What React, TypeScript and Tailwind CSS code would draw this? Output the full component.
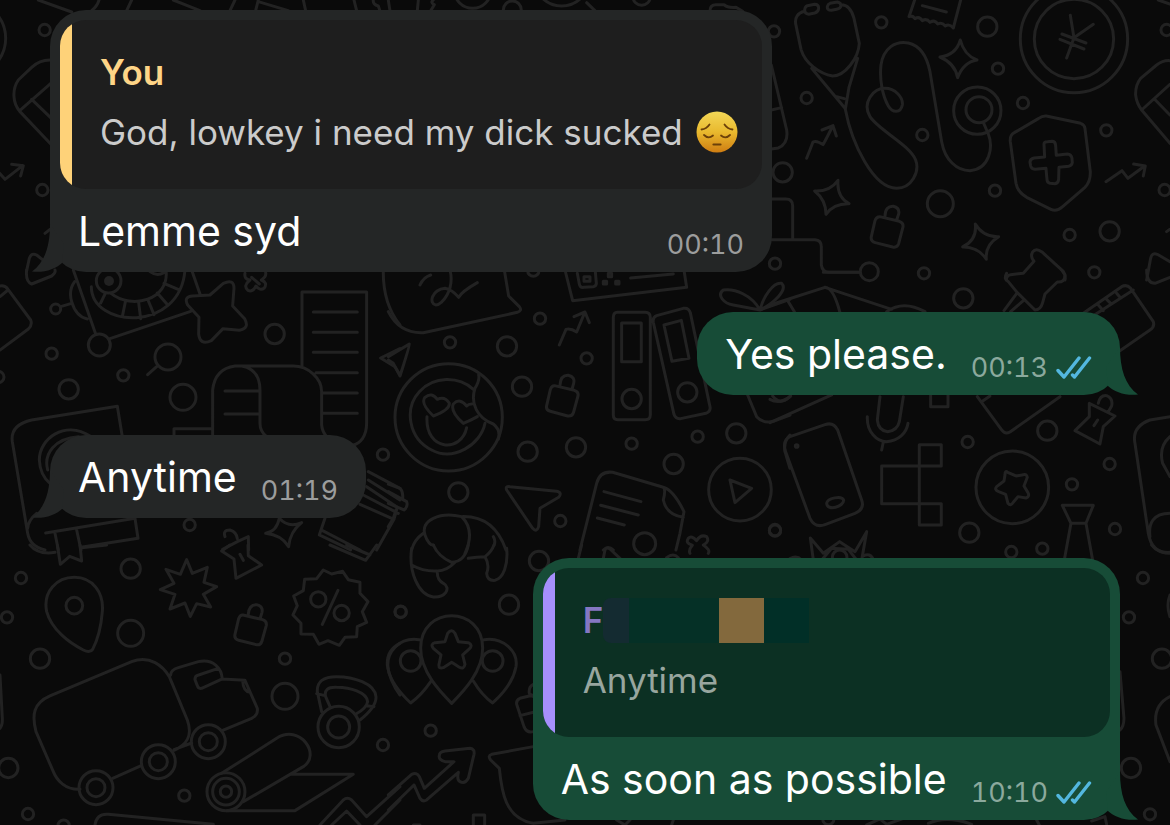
import { ReactNode } from "react";
import clsx from "clsx";

type Circle = [cx: number, cy: number, r: number];

interface Doodle {
  x: number;
  y: number;
  circles: Circle[];
  paths: string[];
}

// Wallpaper doodles, drawn at three times their final size
const doodles: Doodle[] = [
  {
    x: 0,
    y: 0,
    circles: [
      [134, 90, 17],
      [127, 570, 17],
      [-95, 115, 112],
    ],
    paths: [
      // top edge fragments
      "M115 0L215 36M297 0Q292 18 275 32M395 0L380 32M520 0L600 32M705 0L690 32M775 0L767 32M775 5L865 32M910 0L917 32M1062 0L1070 32M1120 0Q1118 14 1135 18L1140 32M1165 0L1170 32",
      // card
      "M155 180Q120 178 95 202L55 240Q40 262 42 290Q43 315 60 335L155 435M60 331L155 248M95 298L155 356",
      // arrow
      "M-10 510L15 538L68 497M35 493L70 497L62 528",
      "M135 700L150 688",
      "M80 812L88 775Q95 757 110 765L135 785",
    ],
  },
  {
    x: 400,
    y: 0,
    circles: [
      [218, -30, 55],
      [337, 30, 27],
      [485, -65, 83],
      [725, -10, 26],
    ],
    paths: [
      "M55 0L52 32M100 0Q90 8 103 14L92 32M560 8L588 35M930 32Q930 14 948 14H972Q982 24 1008 22L1028 34",
    ],
  },
  {
    x: 770,
    y: 0,
    circles: [
      [334, 67, 17],
      [684, 206, 17],
      [759, 309, 17],
      [110, 294, 17],
      [457, 405, 17],
      [1009, 391, 17],
      [675, 572, 17],
      [899, 705, 17],
      [15, 791, 17],
      [462, 820, 17],
      [973, 817, 17],
      [1190, 90, 17],
      [1184, 570, 17],
      [12, 94, 17],
      [652, 80, 29],
      [38, 517, 29],
      [1019, 694, 29],
      [298, 815, 27],
      [511, 611, 39],
      [912, 117, 161],
      [912, 117, 119],
      [622, 332, 71],
      [627, 329, 39],
    ],
    paths: [
      // stethoscope
      "M103 34C85 38 72 52 78 76L93 148C105 190 150 222 188 228C225 228 265 175 268 130L252 55C244 25 230 14 214 14",
      "M112 17L134 13Q146 13 146 25Q145 36 134 39L116 43Q103 41 104 29Q105 20 112 17Z",
      "M180 10L202 6Q213 8 213 17Q212 26 200 28L184 31Q171 31 172 20Q174 12 180 10Z",
      "M125 205L225 325M263 175L237 262L226 328M200 290L223 296",
      "M226 328C245 430 310 565 380 565C425 565 450 515 437 480C420 435 325 390 300 350C275 308 310 265 345 265C375 265 400 292 397 315C392 340 368 340 355 318C338 288 328 240 333 195C340 145 375 122 415 129C455 138 472 175 480 215L515 425C525 480 560 512 600 512C660 508 670 440 655 402L640 367",
      // receipt
      "M434 0L417 50Q428 45 435 56Q448 48 457 62Q470 54 480 67Q494 58 503 72Q515 65 526 78Q538 70 550 84L572 0M457 17L529 36",
      // sparkles
      "M571 120Q582 165 621 180Q580 187 563 233Q555 190 510 171Q558 165 571 120Z",
      "M204 541Q200 590 237 611Q190 610 168 643Q168 600 134 573Q180 575 204 541Z",
      "M616 672Q640 712 686 710Q645 735 649 778Q625 740 578 741Q622 720 616 672Z",
      // yen
      "M901 46L912 113L970 73M912 113L890 174M876 102L948 129M870 118L942 147",
      // shield
      "M829 348L932 370Q944 374 945 385L961 515Q962 545 945 562L878 620Q860 636 843 628L770 592Q742 575 738 550L721 425Q719 405 733 398L805 356Q817 347 829 348Z",
      "M822 432Q822 425 832 425L846 424Q856 424 857 436L859 466L892 462Q904 463 906 475L907 488Q906 497 896 499L867 502L866 538Q865 550 855 551L840 550Q831 548 831 538L828 505L795 508Q784 507 782 498L780 486Q781 476 792 474L824 471Z",
      // chart arrows
      "M110 475L129 426Q140 420 159 434Q170 415 188 378M156 390L189 377L199 408",
      "M1008 545L1056 512L1074 535L1124 498M1091 492L1126 498L1120 528",
      // padlock
      "M329 650L388 664Q401 668 399 681L386 731Q382 744 368 741L316 728Q301 723 304 710L315 662Q319 650 329 650ZM345 648Q346 618 370 619Q390 624 386 642L380 660",
      // card
      "M1200 182Q1180 180 1160 195L1112 235Q1096 255 1097 285Q1100 310 1115 330L1200 430M1115 330L1200 253M1154 298L1200 345",
      // capsule and pipe
      "M4 195L50 390Q56 430 25 444L4 447M4 330L35 323",
      "M4 597H48Q68 597 68 618V719M4 719H135Q154 720 154 740V795Q157 817 178 817H270",
      // push pin
      "M709 840Q710 826 722 824L760 820L792 784Q780 770 788 756Q798 742 816 756L880 814Q888 826 885 840",
      "M1130 840L1142 775Q1146 757 1162 763L1200 785M1165 0L1200 12M1190 695L1200 688",
    ],
  },
  {
    x: 0,
    y: 270,
    circles: [
      [155, 251, 17],
      [370, 316, 17],
      [1149, 554, 17],
      [569, 765, 17],
      [-5, 321, 17],
      [167, 117, 15],
      [206, 358, 29],
      [824, 192, 29],
      [298, 225, 33],
      [504, 261, 39],
      [549, 382, 39],
      [326, 32, 37],
    ],
    paths: [
      // gadget and film reel
      "M80 0Q76 34 95 42L155 18Q168 8 165 0M0 48Q15 45 24 58L92 150Q98 165 85 177L0 240M24 60L0 80M182 110L212 101",
      "M220 0L287 192M330 206L572 124M575 0L600 72M224 35Q205 60 215 95Q228 140 262 147",
      "M274 50C275 175 540 190 555 0M333 70C395 120 510 90 498 0M376 96L367 140M416 98L422 146M444 90L462 134M472 69L504 106M492 40L538 60M316 70L302 99M450 5Q470 20 492 8",
      // magnifier handle
      "M470 290L443 314",
      // star and clover
      "M578 78L630 75L670 40Q702 25 702 55L698 108L734 146Q750 175 718 181L669 176L634 212Q600 228 596 192L597 142L563 105Q550 80 578 78Z",
      "M735 10Q732 28 750 30Q728 48 744 61Q758 68 768 48Q780 64 793 54Q804 38 784 30Q800 20 797 8M755 22L778 42",
      // printed roll
      "M906 292V66H1100V460C1100 500 1080 520 1060 525M940 126H1072M940 187H1072M940 247H1072M948 308H1072M970 369H1072M970 430H1072",
      "M638 500V360Q645 296 705 288H880C925 288 965 325 965 365V465Q967 485 980 500M725 288Q780 298 780 360V460Q780 485 800 500M675 363H778M675 432H776M522 500V476H638",
      // album
      "M367 500L352 409L95 450Q30 465 37 515L83 790Q90 830 135 840M270 498C195 450 118 505 118 570Q120 615 150 640M235 500C165 505 130 550 143 600M83 775Q85 750 110 730M137 789L405 745L414 805L243 832M165 790L175 840M230 780L243 840",
      // pins
      "M675 800Q668 780 690 780Q710 786 712 806M668 838L712 815L745 800L746 840",
      "M838 745Q865 775 905 758Q870 785 866 830Q845 795 797 790Q830 785 838 745Z",
      // paper stack
      "M1105 605L1200 655M1105 630L1200 690M1100 650L1192 712M1090 675L1195 730M1080 703L1182 748M975 745L958 795L1052 840M968 782L1080 840M1182 748L1130 840M1192 712L1182 748",
      "M1150 0Q1148 100 1200 165M1200 236L1142 264L1185 290L1200 315",
    ],
  },
  {
    x: 390,
    y: 270,
    circles: [
      [450, 146, 17],
      [180, 217, 17],
      [590, 265, 17],
      [725, 521, 17],
      [923, 500, 17],
      [511, 753, 17],
      [1155, 780, 17],
      [430, 2, 17],
      [351, 229, 29],
      [396, 350, 29],
      [413, 545, 29],
      [558, 532, 29],
      [851, 582, 29],
      [1039, 490, 29],
      [205, 667, 29],
      [725, 387, 29],
      [892, 367, 29],
      [176, 442, 161],
      [1050, 659, 94],
      [764, 821, 33],
    ],
    paths: [
      // speech bubble
      "M-5 125C15 165 50 190 100 188L382 127Q398 122 388 110L356 78L343 0M90 45Q100 22 122 15M180 0C195 60 155 105 138 105C115 100 125 60 165 55Q185 58 206 82Q215 65 262 38",
      // ticket
      "M525 0L548 92L890 52L882 0M562 10L568 42Q570 54 582 52L610 50Q620 48 619 38L616 5M582 20h18v14h-18ZM655 10h10v10h-10ZM640 34h10v8h-10ZM677 34h10v8h-10ZM722 24L850 12",
      // chart arrow
      "M508 225L528 178Q542 174 560 186L584 128M552 140L585 126L598 158",
      // binders
      "M682 127H766Q781 127 781 142V434Q781 449 766 449H684Q670 449 670 434V142Q670 127 682 127ZM695 159H754V275H695Z",
      "M800 137L880 115Q896 112 901 128L960 410Q963 425 948 430L872 446Q857 448 852 433L790 157Q787 142 800 137ZM822 165L874 151L897 265L846 274Z",
      // padlock
      "M494 347L553 361Q567 365 564 378L551 426Q547 440 533 438L481 424Q467 420 470 407L481 359Q485 346 494 347ZM510 345Q512 315 535 316Q556 321 551 340L546 358",
      // donut face
      "M285 460C272 525 190 575 125 540C55 505 42 415 88 365C132 318 205 318 250 358M266 315Q270 330 255 355C240 400 262 445 310 462Q333 480 325 508",
      "M130 438Q90 400 105 382Q125 365 142 388Q165 378 178 400Q180 420 130 438ZM220 460Q180 425 190 402Q210 382 230 408Q235 402 245 402M220 460Q245 450 262 440M111 440C105 545 215 548 230 473",
      // paper planes
      "M-5 260L58 222Q60 225 30 318L10 280L-5 270M350 660Q345 648 360 650L500 664Q518 668 506 682L450 715L446 770Q440 788 428 775Z",
      // document
      "M570 840L620 640Q630 602 668 607L820 652Q850 660 882 725L870 790L858 840M820 652Q828 660 820 690Q830 735 880 742M642 665L753 695M632 706L745 735M622 744L703 765M640 840Q655 825 670 840",
      "M895 805Q905 795 920 812Q932 792 950 800Q960 815 940 825Q962 840 955 850M895 805Q885 820 907 826Q895 840 900 850",
      // croissant and stack corner
      "M105 795C90 750 150 725 215 740C240 765 248 800 225 850M105 795Q115 825 131 826M65 840Q72 810 100 790M215 740C270 738 320 760 348 840M310 800Q318 812 312 826",
      "M-5 642L30 655Q40 665 38 685M-5 665L50 695Q55 710 42 720L-5 700M18 720L10 745L-5 770",
      // bow
      "M1110 120C1085 75 1035 55 1000 60C980 75 1000 100 1030 105L1110 120C1120 80 1150 35 1175 40C1195 60 1150 100 1110 120ZM1110 120L1200 88",
      "M1073 375L1100 440Q1120 462 1150 454L1200 435M1148 378Q1170 408 1200 380M1020 630L1085 655L1035 698Z",
      "M1200 495Q1180 515 1185 545L1200 595",
    ],
  },
  {
    x: 770,
    y: 270,
    circles: [
      [593, 516, 17],
      [906, 643, 17],
      [1019, 582, 17],
      [15, 782, 17],
      [1035, 777, 17],
      [817, 836, 17],
      [724, 846, 17],
      [832, 482, 29],
      [598, 788, 29],
      [580, 85, 29],
      [80, 528, 4],
      [727, 652, 109],
      [209, 862, 22],
    ],
    paths: [
      // gift top
      "M0 105L165 52Q190 52 210 128M165 52L365 118M55 95L75 128M350 125Q400 90 465 125M160 7H270",
      // push pin
      "M710 10Q700 28 715 35L742 68L702 122M760 92L722 125M742 68L795 120Q812 120 818 98L825 72L862 36Q885 38 885 15L875 0",
      // books
      "M940 130L1055 50Q1070 42 1082 55L1150 155Q1155 170 1140 180L1050 242M950 150L1090 60M985 105L1000 122M1010 88L1022 100M1040 70L1050 82M1130 0Q1130 40 1155 40L1200 22",
      "M0 458L185 375M0 388Q30 405 62 378M622 380L695 480Q705 494 720 486L870 380M635 395L660 378",
      // microphone
      "M330 380L322 450Q325 482 353 485Q382 482 388 455L400 380M292 440C290 485 320 515 350 515C385 512 410 490 414 460M340 516L335 540M482 375V410H534V375",
      // phone
      "M60 500L165 464Q190 455 203 480L275 690Q285 718 255 730L165 764Q135 775 120 745L45 540Q38 510 60 500ZM170 700C172 685 215 675 221 690C222 710 172 725 170 700Z",
      // blocks
      "M335 588H514V524H448V765H514V701H335Z",
      // medal star
      "M713 607Q705 600 705 615L702 633L680 650Q672 660 686 665L707 673L714 700Q722 710 730 697L744 680L768 684Q780 680 774 668L762 648L772 622Q770 610 756 615L738 618Z",
      // pin
      "M958 400L1035 438L1000 470L990 522L915 482L958 440ZM985 400Q990 375 1010 377Q1030 385 1025 408L1015 425M983 450L972 467",
      // beaker
      "M877 706H970L948 760H903ZM903 760L883 870M948 760L968 870",
      // crown
      "M130 870L121 804L160 850L209 815L255 845L290 785L275 870M60 866Q80 855 95 870M280 858Q300 848 310 868M155 870L185 835L235 838L260 870",
      // album
      "M1200 440L1140 450Q1085 470 1095 520L1135 790Q1145 850 1200 850M1200 500Q1165 530 1178 580L1200 620M1200 730C1150 730 1135 760 1140 800",
    ],
  },
  {
    x: 0,
    y: 545,
    circles: [
      [63, 99, 17],
      [21, 217, 17],
      [855, 341, 17],
      [553, 752, 17],
      [84, 807, 17],
      [1149, 600, 17],
      [191, 842, 17],
      [1202, 200, 17],
      [392, 71, 29],
      [120, 341, 29],
      [25, 669, 29],
      [392, 265, 39],
      [855, 454, 39],
      [223, 182, 25],
      [955, 163, 23],
      [1025, 204, 23],
      [288, 728, 51],
      [288, 728, 27],
      [475, 650, 51],
      [475, 650, 27],
      [625, 590, 51],
      [625, 590, 27],
      [1016, 546, 62],
      [1016, 546, 33],
      [678, 740, 57],
      [678, 740, 40],
      [678, 740, 17],
    ],
    paths: [
      // bookmark
      "M90 0Q115 30 165 22M172 0L181 58L209 34L245 48L240 0M245 8L320 0",
      // location pin
      "M250 315C210 295 155 255 140 200C128 140 170 97 223 97C280 97 312 145 307 200C303 250 290 290 278 313Q270 325 250 315Z",
      // burst
      "M560 44L577 85L622 67L612 112L650 125L610 148L632 186L590 176L571 214L555 174L510 192L525 148L481 134L522 115L498 73L541 88Z",
      // discount badge
      "M970 75L995 87L1028 79L1045 104L1080 112V145L1104 170L1087 200L1100 232L1072 245L1070 275L1035 277L1018 301L984 287L957 298L940 268L903 267V235L879 210L892 182L881 153L910 137L914 103L950 101ZM1014 136L967 238",
      // pin and padlock
      "M665 18L702 42L708 100L785 60L745 32L744 0M665 18L690 0M720 28L730 46M990 0L1097 46L1130 0M1040 0L1110 30",
      "M729 210L788 224Q801 228 799 241L786 288Q782 302 768 299L716 286Q702 281 705 268L716 221Q720 209 729 210ZM745 208Q747 178 770 179Q790 184 786 202L781 219",
      // truck
      "M240 733C195 735 170 705 160 680L108 560C95 510 100 475 150 453L395 350C450 328 490 365 508 395L562 525C580 575 558 600 522 616M338 700L422 663M522 614L575 594M512 390Q512 375 535 368L595 350C640 340 665 370 667 402L735 406L772 490Q775 510 755 520L668 556M667 402L605 430Q595 432 592 422L585 404Q584 392 596 390L655 370M728 408Q730 440 750 442",
      // kettlebell
      "M965 500L952 440Q950 395 1010 395C1060 395 1125 415 1128 455Q1130 485 1080 525M990 485L977 455Q970 425 1010 427C1050 428 1100 440 1103 470Q1100 490 1068 507M950 446L975 452M1100 482L1122 485",
      // yoga mat
      "M665 685L830 580C900 535 965 630 910 665L730 770M875 688H1060L885 797H680",
      "M285 840Q290 805 325 808L640 838M960 840L1030 765Q1042 755 1055 765L1100 815L1200 725M995 840L1040 798L1080 840M1125 840L1200 765",
      "M0 390L7 520Q8 540 0 550M1200 295Q1160 315 1162 360Q1170 410 1200 450",
    ],
  },
  {
    x: 390,
    y: 545,
    circles: [
      [32, 201, 17],
      [122, 557, 17],
      [447, 48, 29],
      [357, 179, 29],
      [62, 348, 31],
      [308, 348, 31],
    ],
    paths: [
      // croissant
      "M65 10C55 80 85 150 130 156C165 158 185 130 160 115Q140 105 142 78M65 60Q100 80 142 78Q170 78 195 52M130 0Q145 35 185 52Q225 50 235 0M235 40Q260 35 285 35Q300 60 290 85Q292 108 315 106C340 100 355 60 350 10M285 35Q305 20 312 0",
      // balloons
      "M185 475C150 440 92 380 92 310C92 180 278 180 278 310C278 380 220 440 185 475ZM88 284C30 275 -15 320 -5 375Q5 420 62 474Q95 450 122 410M282 284C340 275 385 320 378 365Q368 420 308 474Q275 450 250 408",
      "M173 265Q185 250 195 265L205 290L235 293Q250 300 238 312L218 330L225 358Q222 375 207 366L185 352L160 368Q145 373 147 358L153 330L130 310Q120 298 135 293L165 290Z",
      // growth arrow
      "M-5 750L65 688Q80 680 88 695L103 730L192 650L165 650Q145 645 148 632Q148 620 165 618L240 610Q255 612 252 628L235 700Q225 718 210 710Q200 705 205 682L110 765Q98 772 90 760L72 720L-5 795",
      // bag and pot
      "M430 418Q415 425 418 445L430 455M430 450L390 460Q378 465 380 478L402 545Q410 565 430 560M390 512L430 502M430 605L305 628Q292 632 302 645L328 670C335 740 345 820 430 835L525 825M250 840V810H284V840M70 840H90",
      "M575 0L565 40M640 40L645 15Q650 5 660 12L690 40M830 38Q850 22 865 38",
      "M680 825L705 840L720 825M850 825L845 840",
    ],
  },
  {
    x: 770,
    y: 545,
    circles: [
      [1119, 99, 17],
      [1077, 217, 17],
      [1140, 808, 17],
      [175, 822, 17],
      [1176, 341, 29],
      [1083, 669, 29],
    ],
    paths: [
      "M1145 0Q1165 25 1200 22M1200 150Q1188 180 1200 215M1050 380L1062 520Q1062 545 1050 555M1200 455Q1150 480 1158 540L1200 650",
      "M290 840L330 822L350 838L395 822M475 835Q530 810 605 838M800 825L808 840M965 828L1005 815L1010 838",
    ],
  },
];

function Wallpaper() {
  return (
    <svg
      className="absolute inset-0 h-full w-full"
      viewBox="0 0 1170 825"
      preserveAspectRatio="xMidYMid slice"
      fill="none"
      stroke="#222222"
      strokeWidth={9}
      strokeLinecap="round"
      strokeLinejoin="round"
      aria-hidden="true"
    >
      {doodles.map((doodle) => (
        <g
          key={`${doodle.x}-${doodle.y}`}
          transform={`translate(${doodle.x} ${doodle.y}) scale(0.3333)`}
        >
          {doodle.circles.map(([cx, cy, r]) => (
            <circle key={`${cx}-${cy}-${r}`} cx={cx} cy={cy} r={r} />
          ))}
          <path d={doodle.paths.join("")} />
        </g>
      ))}
      <circle cx="109" cy="281" r="5" fill="#222222" stroke="none" />
    </svg>
  );
}

function PensiveFace() {
  return (
    <svg
      className="h-[42px] w-[42px] shrink-0"
      viewBox="0 0 42 42"
      fill="none"
      role="img"
      aria-label="pensive face"
    >
      <defs>
        <linearGradient id="face" x1="0" y1="0" x2="0" y2="1">
          <stop offset="0" stopColor="#f3d757" />
          <stop offset="0.5" stopColor="#e9b92e" />
          <stop offset="1" stopColor="#cf7d12" />
        </linearGradient>
      </defs>
      <circle cx="21" cy="21" r="20.5" fill="url(#face)" />
      <g stroke="#6b4009" strokeWidth="1.8" strokeLinecap="round">
        <path d="M5.5 18.5Q10.5 18 13.5 13.5M28.5 13.5Q31.5 18 36.5 18.5" />
        <path d="M8 24Q12.5 28.5 17 24.5M25 24.5Q29.5 28.5 34 24" />
        <path d="M17.5 33.5H24.5" strokeWidth="2.2" />
      </g>
    </svg>
  );
}

function ReadTicks() {
  return (
    <svg
      className="mb-1 ml-2 h-6 w-9"
      viewBox="0 0 36 24"
      fill="none"
      stroke="#53b7df"
      strokeWidth="3.4"
      strokeLinecap="round"
      strokeLinejoin="round"
      role="img"
      aria-label="Read"
    >
      <path d="M2 14.5L8 21L23 2M16.5 19L18.5 21L33.5 2" />
    </svg>
  );
}

interface QuoteProps {
  outgoing?: boolean;
  author: ReactNode;
  children: ReactNode;
}

function Quote({ outgoing, author, children }: QuoteProps) {
  return (
    <blockquote
      className={clsx(
        "mx-2.5 mt-2.5 flex overflow-hidden rounded-[26px] text-[35px]/[60px]",
        outgoing ? "bg-[#0c3023] text-[#98a69f]" : "bg-[#1e1e1e] text-[#cbcbcb]",
      )}
    >
      <div
        className={clsx(
          "w-3 shrink-0",
          outgoing ? "bg-[#a68ffc]" : "bg-[#fed279]",
        )}
      />
      <div className="min-w-0 flex-1 pt-[22px] pr-6 pb-[27px] pl-7">
        <div
          className={clsx(
            "flex items-center font-semibold",
            outgoing ? "text-[#8577c2]" : "text-[#fed587]",
          )}
        >
          {author}
        </div>
        <div className="flex items-center justify-between gap-1.5">
          {children}
        </div>
      </div>
    </blockquote>
  );
}

interface BubbleProps {
  text: string;
  time: string;
  outgoing?: boolean;
  className?: string;
  children?: ReactNode;
}

function Bubble({ text, time, outgoing, className, children }: BubbleProps) {
  return (
    <li
      className={clsx(
        "relative max-w-full rounded-[36px]",
        outgoing ? "self-end bg-[#174c37]" : "self-start bg-[#242626]",
        className,
      )}
    >
      {children}
      <div className="flex items-end justify-between gap-6 px-7 pt-3.5 pb-[11px]">
        <p className="mb-0.5 text-[41px]/[56px] text-white">{text}</p>
        <div
          className={clsx(
            "flex items-end text-[27px]/[32px] tabular-nums",
            outgoing ? "text-[#8ba99d]" : "text-[#9c9d9d]",
          )}
        >
          <time>{time}</time>
          {outgoing && <ReadTicks />}
        </div>
      </div>
      {/* tail */}
      <svg
        className={clsx(
          "absolute bottom-0 h-12 w-8",
          outgoing ? "-right-[18px] -scale-x-100" : "-left-[18px]",
        )}
        viewBox="0 0 32 48"
        fill={outgoing ? "#174c37" : "#242626"}
        aria-hidden="true"
      >
        <path d="M18 0C18 22 13 38 0 47.5C12 49 24 45 30 39L32 20Z" />
      </svg>
    </li>
  );
}

export default function App() {
  return (
    <main className="relative min-h-screen overflow-hidden bg-[#0a0a0a] font-['Inter','Liberation_Sans',sans-serif]">
      <Wallpaper />
      <ul className="relative flex flex-col gap-10 px-[50px] pt-2.5">
        <Bubble text="Lemme syd" time="00:10" className="w-[722px]">
          <Quote author="You">
            <span>God, lowkey i need my dick sucked</span>
            <PensiveFace />
          </Quote>
        </Bubble>
        <Bubble text="Yes please." time="00:13" outgoing />
        <Bubble text="Anytime" time="01:19" />
        <Bubble text="As soon as possible" time="10:10" outgoing>
          <Quote
            outgoing
            author={
              <>
                F
                {/* the rest of the name is hidden */}
                <span className="h-[45px] w-[26px] rounded-l-lg bg-[#142b31]" />
                <span className="h-[45px] w-[90px] bg-[#053026]" />
                <span className="h-[45px] w-[45px] bg-[#83693d]" />
                <span className="h-[45px] w-[45px] bg-[#012f27]" />
              </>
            }
          >
            Anytime
          </Quote>
        </Bubble>
      </ul>
    </main>
  );
}
